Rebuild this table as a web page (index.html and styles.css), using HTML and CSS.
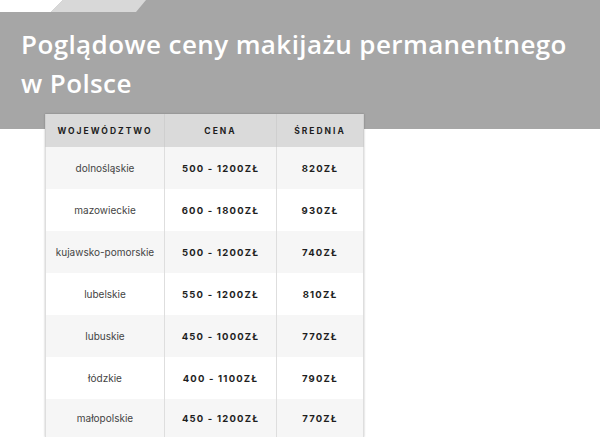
FILE: index.html
```html
<!DOCTYPE html>
<html lang="pl">
<head>
<meta charset="utf-8">
<link rel="stylesheet" href="styles.css">
</head>
<body>
<div class="strip">
  <svg class="strip-art" width="600" height="12" viewBox="0 0 600 12" preserveAspectRatio="none">
    <polygon points="0,0 63,0 51,12 0,12" fill="#ffffff"/>
    <polygon points="63,0 146,0 136,12 51,12" fill="#d8d8d8"/>
  </svg>
</div>
<header class="band">
  <h1 class="title">Poglądowe ceny makijażu permanentnego w Polsce</h1>
</header>
<div class="table-wrap">
  <table class="prices">
    <thead>
      <tr><th class="c1">WOJEWÓDZTWO</th><th class="c2">CENA</th><th class="c3">ŚREDNIA</th></tr>
    </thead>
    <tbody>
      <tr><td class="region">dolnośląskie</td><td class="num">500 - 1200ZŁ</td><td class="num">820ZŁ</td></tr>
      <tr><td class="region">mazowieckie</td><td class="num">600 - 1800ZŁ</td><td class="num">930ZŁ</td></tr>
      <tr><td class="region">kujawsko-pomorskie</td><td class="num">500 - 1200ZŁ</td><td class="num">740ZŁ</td></tr>
      <tr><td class="region">lubelskie</td><td class="num">550 - 1200ZŁ</td><td class="num">810ZŁ</td></tr>
      <tr><td class="region">lubuskie</td><td class="num">450 - 1000ZŁ</td><td class="num">770ZŁ</td></tr>
      <tr><td class="region">łódzkie</td><td class="num">400 - 1100ZŁ</td><td class="num">790ZŁ</td></tr>
      <tr class="last"><td class="region">małopolskie</td><td class="num">450 - 1200ZŁ</td><td class="num">770ZŁ</td></tr>
    </tbody>
  </table>
</div>
</body>
</html>
```
FILE: styles.css
```css
html, body {
  margin: 0;
  padding: 0;
  background: #ffffff;
  overflow: hidden;
}
.strip {
  height: 12px;
  background: #a6a6a6;
  line-height: 0;
}
.strip-art {
  display: block;
}
.band {
  background: #a6a6a6;
  height: 117px;
  box-sizing: border-box;
  padding: 13px 0 0 21px;
}
.title {
  margin: 0;
  font-family: "Open Sans", "Noto Sans", sans-serif;
  font-weight: 600;
  font-size: 26px;
  line-height: 39px;
  letter-spacing: 0.4px;
  color: #ffffff;
  width: 566px;
}
.table-wrap {
  position: relative;
  margin: -15px 0 0 45px;
  width: 317px;
}
.prices {
  border-collapse: collapse;
  width: 317px;
  table-layout: fixed;
  box-shadow: 0 0 2px rgba(0,0,0,0.25);
}
.prices th {
  background: #dadada;
  height: 33px;
  padding: 0;
  font-family: "Inter", "DejaVu Sans", sans-serif;
  font-weight: 700;
  font-size: 8.5px;
  letter-spacing: 2px;
  color: #1e1e1e;
  text-align: center;
  border-left: 1px solid #cfcfcf;
  border-right: 1px solid #cfcfcf;
}
.prices .c1 { width: 118px; }
.prices .c2 { width: 111px; }
.prices .c3 { width: 86px; }
.prices td {
  height: 42px;
  padding: 0;
  text-align: center;
  border-left: 1px solid #dedede;
  border-right: 1px solid #dedede;
}
.prices tbody tr:nth-child(odd) td { background: #f6f6f6; }
.prices tbody tr:nth-child(even) td { background: #ffffff; }
.prices tr.last td { height: 38px; }
.region {
  font-family: "Inter", "Liberation Sans", sans-serif;
  font-size: 10px;
  color: #444444;
}
.num {
  font-family: "Inter", "DejaVu Sans", sans-serif;
  font-weight: 700;
  font-size: 9.5px;
  letter-spacing: 1.2px;
  color: #1e1e1e;
}
```
